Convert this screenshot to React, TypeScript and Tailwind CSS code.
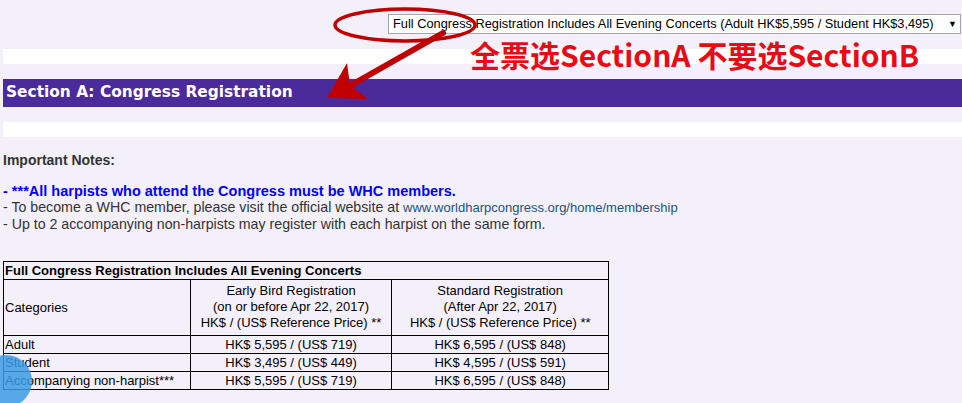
export default function App() {
  const rows = [
    ["Adult", "HK$ 5,595 / (US$ 719)", "HK$ 6,595 / (US$ 848)"],
    ["Student", "HK$ 3,495 / (US$ 449)", "HK$ 4,595 / (US$ 591)"],
    ["Accompanying non-harpist***", "HK$ 5,595 / (US$ 719)", "HK$ 6,595 / (US$ 848)"],
  ];
  return (
    <div className="relative h-[403px] w-[962px] overflow-hidden bg-[#f4f0fa] font-['Liberation_Sans',Arial,sans-serif]">
      <div className="flex justify-end pr-[1px] pt-[14px]">
        <div className="flex h-[20px] w-[573px] items-center justify-between border border-[#a6a6a6] bg-white pl-[4px] pr-[3px] text-[12.8px] leading-[18px] text-black">
          <span>Full Congress Registration Includes All Evening Concerts (Adult HK$5,595 / Student HK$3,495)</span>
          <span className="text-[9px]">▼</span>
        </div>
      </div>
      <div className="ml-[3px] mt-[15px] h-[15px] bg-white" />
      <div className="ml-[3px] mt-[15px] flex h-[28px] items-center bg-[#4b2a9c] pl-[3px] font-['DejaVu_Sans',Verdana,sans-serif] text-[15.4px] font-bold text-white">
        Section A: Congress Registration
      </div>
      <div className="ml-[3px] mt-[15px] h-[15px] bg-white" />

      <div className="pl-[3px] pt-[15px] text-[14px] leading-[16px] text-[#333]">
        <div className="font-bold">Important Notes:</div>
        <div className="mt-[15px] text-[14.5px] font-bold text-[#0000ff]">- ***All harpists who attend the Congress must be WHC members.</div>
        <div className="text-[14.2px]">
          - To become a WHC member, please visit the official website at{" "}
          <span className="text-[13px] text-[#23527c]">www.worldharpcongress.org/home/membership</span>
        </div>
        <div className="text-[14.2px]">- Up to 2 accompanying non-harpists may register with each harpist on the same form.</div>
      </div>

      <table className="ml-[3px] mt-[29px] w-[606px] border-collapse border border-black text-[13px] leading-[17px] text-black">
        <colgroup>
          <col className="w-[187px]" />
          <col className="w-[202px]" />
          <col className="w-[217px]" />
        </colgroup>
        <tbody>
          <tr>
            <td colSpan={3} className="border border-black px-[1px] py-0 font-bold">
              Full Congress Registration Includes All Evening Concerts
            </td>
          </tr>
          <tr>
            <td className="border border-black px-[1px] py-0 align-middle">Categories</td>
            <td className="border border-black px-[1px] pb-[4px] pt-[3px] text-center leading-[16px]">
              Early Bird Registration
              <br />
              (on or before Apr 22, 2017)
              <br />
              HK$ / (US$ Reference Price) **
            </td>
            <td className="border border-black px-[1px] pb-[4px] pt-[3px] text-center leading-[16px]">
              Standard Registration
              <br />
              (After Apr 22, 2017)
              <br />
              HK$ / (US$ Reference Price) **
            </td>
          </tr>
          {rows.map((r) => (
            <tr key={r[0]}>
              <td className="border border-black px-[1px] py-0">{r[0]}</td>
              <td className="border border-black px-[1px] py-0 text-center">{r[1]}</td>
              <td className="border border-black px-[1px] py-0 text-center">{r[2]}</td>
            </tr>
          ))}
        </tbody>
      </table>

      <div className="pointer-events-none absolute left-[470px] top-[34px] whitespace-nowrap font-['Noto_Sans_CJK_SC',sans-serif] text-[30px] font-bold leading-[40px] text-[#ea0a16]">
        全票选SectionA 不要选SectionB
      </div>

      <svg className="pointer-events-none absolute left-0 top-0" width="962" height="403" viewBox="0 0 962 403">
        <ellipse cx="405" cy="25" rx="70" ry="16" fill="none" stroke="#c00000" strokeWidth="3.5" />
        <line x1="443" y1="33" x2="346" y2="88" stroke="#c00000" strokeWidth="6" strokeLinecap="round" />
        <polygon points="327,98 347,63 350,85 368,99" fill="#c00000" />
      </svg>

      <div className="pointer-events-none absolute left-[-20px] top-[355px] h-[52px] w-[52px] rounded-full bg-[#3a9be3]/85" />
    </div>
  );
}
